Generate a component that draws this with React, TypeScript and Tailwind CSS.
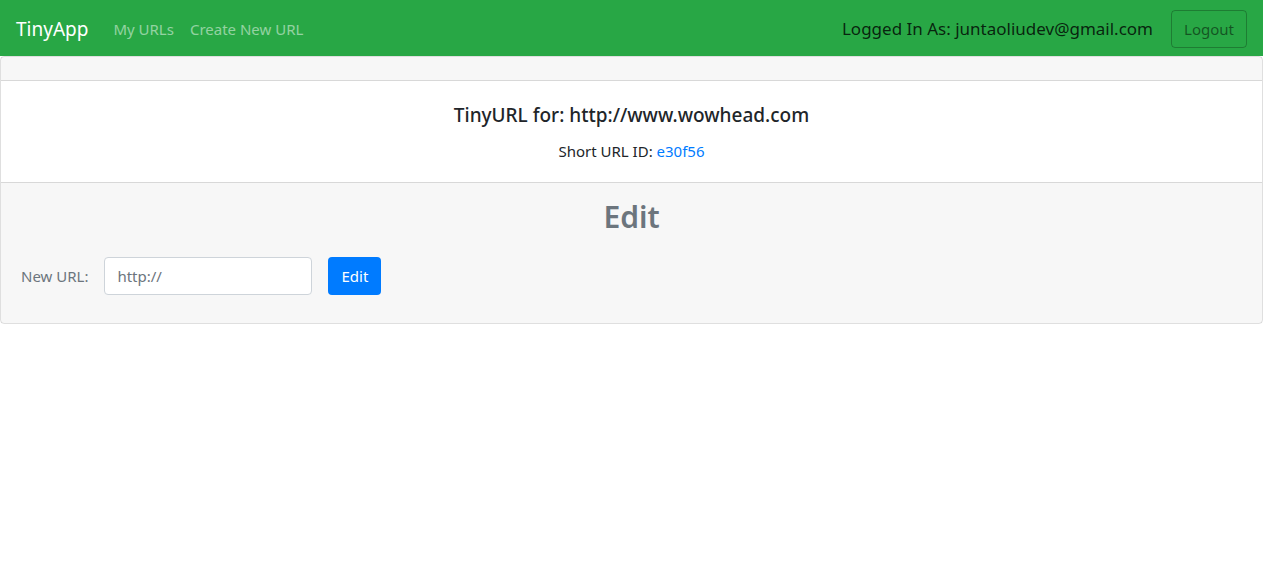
import React from 'react';

export default function App() {
  return (
    <div className="min-h-screen bg-white text-[#212529] text-[15px] leading-6" style={{ fontFamily: '"Noto Sans", "Open Sans", sans-serif' }}>
      {/* Navbar */}
      <nav className="h-14 bg-[#28a745] flex items-center px-4 pt-px">
        <a className="text-white text-[19px] mr-[17px] py-[5px]">TinyApp</a>
        <a className="text-white/50 px-2">My URLs</a>
        <a className="text-white/50 px-2">Create New URL</a>
        <div className="ml-auto flex items-center">
          <span className="text-black/80 text-[17px] mr-[18px]">Logged In As: juntaoliudev@gmail.com</span>
          <button className="h-[38px] w-[76px] rounded border border-black/25 text-black/50">Logout</button>
        </div>
      </nav>

      {/* Card */}
      <div className="border border-black/[.125] rounded">
        <div className="h-6 bg-black/[.03] border-b border-black/[.125]" />
        <div className="px-5 pt-[22px] pb-[19px] text-center">
          <h5 className="text-[19px] font-medium leading-6 mb-3">TinyURL for: http://www.wowhead.com</h5>
          <p>
            Short URL ID: <a className="text-[#007bff]">e30f56</a>
          </p>
        </div>
        <div className="bg-black/[.03] border-t border-black/[.125] px-5 pt-[15px] pb-7">
          <h2 className="text-[30px] font-semibold leading-[38px] text-[#6c757d] text-center mb-[21px]">Edit</h2>
          <form className="flex items-center">
            <label className="text-[#6c757d] mr-4">New URL:</label>
            <input
              type="text"
              placeholder="http://"
              className="w-[208px] h-[38px] px-3 rounded bg-white border border-[#ced4da] text-[#495057] placeholder:text-[#6c757d] outline-none"
            />
            <button type="button" className="ml-4 h-[38px] w-[53px] rounded bg-[#007bff] text-white">
              Edit
            </button>
          </form>
        </div>
      </div>
    </div>
  );
}
